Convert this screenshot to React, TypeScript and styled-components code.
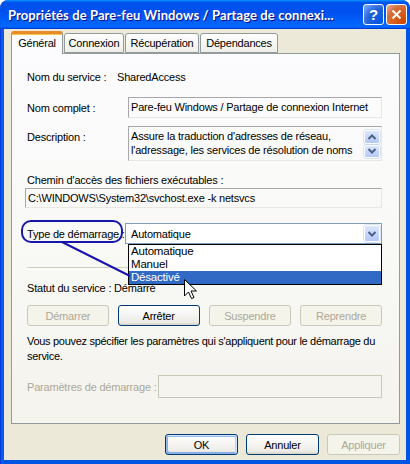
import React from 'react';
import styled, { createGlobalStyle, css } from 'styled-components';

const Global = createGlobalStyle`
  html, body { margin: 0; padding: 0; background: #ffffff; }
  body { font-family: "Liberation Sans", Arial, sans-serif; font-size: 11px; letter-spacing: -0.2px; color: #000; }
  #root { width: 410px; height: 464px; }
`;

const Window = styled.div`
  position: relative;
  width: 410px;
  height: 464px;
  box-sizing: border-box;
  background: linear-gradient(90deg, #0019CF 0, #0A5CEB 1px, #0A5CEB 3px, #0055E5 4px);
  border-radius: 8px 8px 0 0;
  display: flex;
  flex-direction: column;
  overflow: hidden;
`;

const TitleBar = styled.div`
  height: 29px;
  flex: none;
  display: flex;
  align-items: center;
  padding: 0 3px 0 8px;
  background: linear-gradient(180deg, #0997ff, #0053ee 8%, #0050ee 40%, #0066ff 88%, #0066ff 93%, #005bff 95%, #003dd7 96%, #003dd7);
  border-radius: 8px 8px 0 0;
`;

const Title = styled.div`
  flex: 1;
  color: #fff;
  font-family: Lato, "Liberation Sans", sans-serif;
  font-weight: bold;
  font-size: 13px;
  letter-spacing: 0.1px;
  text-shadow: 1px 1px #0f1089;
  white-space: nowrap;
  overflow: hidden;
`;

const CapButton = styled.div<{ $kind: 'help' | 'close' }>`
  width: 21px;
  height: 21px;
  box-sizing: border-box;
  margin-left: 2px;
  border: 1px solid #fff;
  border-radius: 3px;
  display: flex;
  align-items: center;
  justify-content: center;
  color: #fff;
  font-family: "Liberation Sans", sans-serif;
  font-weight: bold;
  font-size: 15px;
  letter-spacing: 0;
  ${p => p.$kind === 'help'
    ? css`background: radial-gradient(circle at 90% 90%, #0054e9 0%, #2263d5 55%, #4477e6 70%, #5f9af8 85%, #6ba1fa 100%);`
    : css`background: radial-gradient(circle at 90% 90%, #cc4600 0%, #dc6527 55%, #cd7546 70%, #e8906a 85%, #f0b496 100%);`}
`;

const Body = styled.div`
  flex: 1;
  margin: 0 4px 4px 4px;
  background: #ece9d8;
  display: flex;
  flex-direction: column;
  padding: 2px 6px 0 7px;
`;

const TabStrip = styled.div`
  height: 22px;
  display: flex;
  align-items: flex-end;
  position: relative;
  z-index: 2;
`;

const Tab = styled.div<{ $w: number; $active?: boolean }>`
  box-sizing: border-box;
  width: ${p => p.$w}px;
  height: ${p => (p.$active ? 23 : 20)}px;
  margin-right: 1px;
  margin-bottom: ${p => (p.$active ? -1 : 0)}px;
  border: 1px solid #919b9c;
  border-bottom: ${p => (p.$active ? 'none' : '1px solid #919b9c')};
  border-radius: 3px 3px 0 0;
  display: flex;
  align-items: center;
  justify-content: center;
  padding-bottom: ${p => (p.$active ? 2 : 0)}px;
  background: ${p => (p.$active ? '#fcfcfe' : 'linear-gradient(180deg, #fff, #fafaf9 26%, #f0f0ea 95%, #ecebe6)')};
  ${p => p.$active && css`border-top: 3px solid #e68b2c; box-shadow: inset 0 1px #ffc73c;`}
`;

const Panel = styled.div`
  box-sizing: border-box;
  width: 389px;
  height: 371px;
  border: 1px solid #919b9c;
  background: linear-gradient(180deg, #fcfcfe 0%, #f8f8f5 60%, #f4f3ee 100%);
  display: flex;
  flex-direction: column;
  padding: 0 17px 0 15px;
  position: relative;
  z-index: 1;
`;

const Row = styled.div<{ $mt: number; $align?: string }>`
  display: flex;
  align-items: ${p => p.$align || 'center'};
  margin-top: ${p => p.$mt}px;
  position: relative;
`;

const Label = styled.div<{ $w?: number; $pt?: number; $dim?: boolean }>`
  ${p => p.$w && css`width: ${p.$w}px; flex: none;`}
  line-height: 14px;
  padding-top: ${p => p.$pt || 0}px;
  white-space: nowrap;
  color: ${p => (p.$dim ? '#aca899' : '#000')};
`;

const Field = styled.div<{ $h: number; $ml?: number; $dim?: boolean }>`
  box-sizing: border-box;
  flex: 1;
  height: ${p => p.$h}px;
  margin-left: ${p => p.$ml || 0}px;
  border: 1px solid;
  border-color: ${p => (p.$dim ? '#c9c7ba' : '#a7a6aa #e8e7e2 #e8e7e2 #a7a6aa')};
  padding: 2px 1px;
  line-height: 14px;
  white-space: nowrap;
  overflow: hidden;
  position: relative;
  display: flex;
`;

const FieldText = styled.div`
  flex: 1;
  padding-left: 1px;
`;

const ScrollCol = styled.div`
  width: 16px;
  flex: none;
  display: flex;
  flex-direction: column;
  gap: 1px;
  margin-top: 1px;
`;

const ArrowBtn = styled.div<{ $h: number }>`
  box-sizing: border-box;
  height: ${p => p.$h}px;
  width: 16px;
  border: 1px solid #fff;
  border-radius: 2px;
  background: linear-gradient(180deg, #dce7fd, #c4d4fb 60%, #b4c8f6);
  box-shadow: 0 0 0 0.5px #b8c8ec;
  display: flex;
  align-items: center;
  justify-content: center;
`;

const Combo = styled.div`
  box-sizing: border-box;
  flex: 1;
  height: 21px;
  border: 1px solid #7f9db9;
  background: #fff;
  display: flex;
  align-items: center;
  padding: 0 1px 0 5px;
  position: relative;
`;

const ComboText = styled.div`
  flex: 1;
`;

const DropList = styled.div`
  position: absolute;
  left: 2px;
  right: -1px;
  top: 20px;
  box-sizing: border-box;
  height: 41px;
  border: 1px solid #000;
  background: #fff;
  z-index: 5;
  display: flex;
  flex-direction: column;
`;

const DropItem = styled.div<{ $sel?: boolean }>`
  height: 13px;
  line-height: 13px;
  padding-left: 2px;
  font-size: 11.5px;
  background: ${p => (p.$sel ? '#316ac5' : 'transparent')};
  color: ${p => (p.$sel ? '#fff' : '#000')};
`;

const Separator = styled.div<{ $mt: number }>`
  margin-top: ${p => p.$mt}px;
  height: 1px;
  border-top: 1px solid #d0d0bf;
  border-bottom: 1px solid #fff;
`;

const ButtonRow = styled.div<{ $mt: number; $justify?: string; $gap: number }>`
  display: flex;
  justify-content: ${p => p.$justify || 'flex-start'};
  gap: ${p => p.$gap}px;
  margin-top: ${p => p.$mt}px;
`;

const Button = styled.div<{ $w: number; $state?: 'normal' | 'disabled' | 'default' }>`
  box-sizing: border-box;
  width: ${p => p.$w}px;
  height: 21px;
  border-radius: 3px;
  display: flex;
  align-items: center;
  justify-content: center;
  ${p => p.$state === 'disabled'
    ? css`border: 1px solid #cac8bb; background: #f5f4ea; color: #aca899;`
    : css`border: 1px solid #003c74; background: linear-gradient(180deg, #fff, #ecebe6 86%, #d6d0c5); color: #000;`}
  ${p => p.$state === 'default' && css`
    box-shadow: inset -1px 1px #cee7ff, inset 1px 2px #98b8ea, inset -2px 2px #bcd4f6, inset 1px -1px #89ade4, inset 2px -2px #89ade4;
  `}
`;

const Paragraph = styled.div`
  margin-top: 8px;
  margin-right: -4px;
  line-height: 15px;
  letter-spacing: -0.3px;
  white-space: nowrap;
`;

const Overlay = styled.svg`
  position: absolute;
  left: 0;
  top: 0;
  width: 410px;
  height: 464px;
  pointer-events: none;
  z-index: 10;
`;

const Chevron = ({ up }: { up?: boolean }) => (
  <svg width="8" height="6" viewBox="0 0 8 6">
    <path d={up ? 'M0.5 5 L4 1.5 L7.5 5' : 'M0.5 1 L4 4.5 L7.5 1'} fill="none" stroke="#4d6185" strokeWidth="2" />
  </svg>
);

export default function App() {
  return (
    <>
      <Global />
      <Window>
        <TitleBar>
          <Title>Propriétés de Pare-feu Windows / Partage de connexi...</Title>
          <CapButton $kind="help">?</CapButton>
          <CapButton $kind="close">
            <svg width="11" height="11" viewBox="0 0 11 11">
              <path d="M1.5 1.5 L9.5 9.5 M9.5 1.5 L1.5 9.5" stroke="#fff" strokeWidth="2" />
            </svg>
          </CapButton>
        </TitleBar>
        <Body>
          <TabStrip>
            <Tab $w={52} $active>Général</Tab>
            <Tab $w={60}>Connexion</Tab>
            <Tab $w={74}>Récupération</Tab>
            <Tab $w={78}>Dépendances</Tab>
          </TabStrip>
          <Panel>
            <Row $mt={16}>
              <Label $w={90}>Nom du service :</Label>
              <Label>SharedAccess</Label>
            </Row>
            <Row $mt={13} $align="flex-start">
              <Label $w={101} $pt={4}>Nom complet :</Label>
              <Field $h={21}><FieldText>Pare-feu Windows / Partage de connexion Internet</FieldText></Field>
            </Row>
            <Row $mt={8} $align="flex-start">
              <Label $w={101} $pt={4}>Description :</Label>
              <Field $h={35}>
                <FieldText>
                  Assure la traduction d'adresses de réseau,<br />
                  l'adressage, les services de résolution de noms
                </FieldText>
                <ScrollCol>
                  <ArrowBtn $h={14}><Chevron up /></ArrowBtn>
                  <ArrowBtn $h={14}><Chevron /></ArrowBtn>
                </ScrollCol>
              </Field>
            </Row>
            <Row $mt={12}>
              <Label>Chemin d'accès des fichiers exécutables :</Label>
            </Row>
            <Row $mt={1}>
              <Field $h={20} $ml={-2}><FieldText>C:\WINDOWS\System32\svchost.exe -k netsvcs</FieldText></Field>
            </Row>
            <Row $mt={15}>
              <Label $w={98}>Type de démarrage :</Label>
              <Combo>
                <ComboText>Automatique</ComboText>
                <ArrowBtn $h={17}><Chevron /></ArrowBtn>
                <DropList>
                  <DropItem>Automatique</DropItem>
                  <DropItem>Manuel</DropItem>
                  <DropItem $sel>Désactivé</DropItem>
                </DropList>
              </Combo>
            </Row>
            <Separator $mt={23} />
            <Row $mt={11}>
              <Label>Statut du service : Démarré</Label>
            </Row>
            <ButtonRow $mt={10} $gap={9}>
              <Button $w={82} $state="disabled">Démarrer</Button>
              <Button $w={82}>Arrêter</Button>
              <Button $w={83} $state="disabled">Suspendre</Button>
              <Button $w={82} $state="disabled">Reprendre</Button>
            </ButtonRow>
            <Paragraph>
              Vous pouvez spécifier les paramètres qui s'appliquent pour le démarrage du<br />
              service.
            </Paragraph>
            <Row $mt={11}>
              <Label $w={131} $dim>Paramètres de démarrage :</Label>
              <Field $h={23} $dim />
            </Row>
          </Panel>
          <ButtonRow $mt={10} $justify="flex-end" $gap={8}>
            <Button $w={73} $state="default">OK</Button>
            <Button $w={73}>Annuler</Button>
            <Button $w={73} $state="disabled">Appliquer</Button>
          </ButtonRow>
        </Body>
        <Overlay viewBox="0 0 410 464">
          <rect x="22" y="221" width="100" height="21" rx="9" fill="none" stroke="#1616a8" strokeWidth="2" />
          <line x1="62" y1="242" x2="130" y2="276" stroke="#1616a8" strokeWidth="2" />
          <path d="M184.5 279.5 L184.5 296 L188.5 292 L191.5 298.5 L194 297.5 L191 291 L196.5 291 Z" fill="#fff" stroke="#000" strokeWidth="1" strokeLinejoin="round" />
        </Overlay>
      </Window>
    </>
  );
}
